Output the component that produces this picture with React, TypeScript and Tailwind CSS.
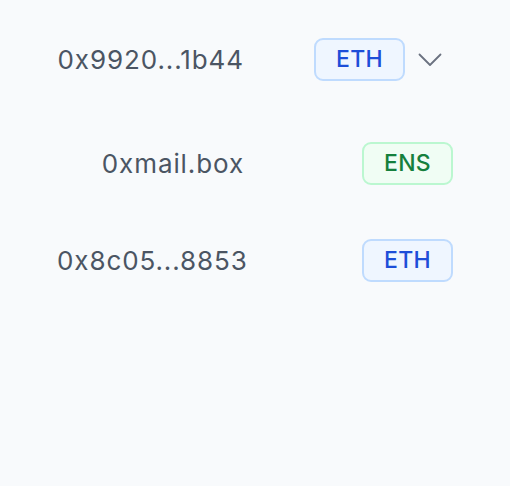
import React from 'react';

type Tag = 'ETH' | 'ENS';

interface Row {
  label: string;
  tag: Tag;
  expandable?: boolean;
}

const rows: Row[] = [
  { label: '0x9920...1b44', tag: 'ETH', expandable: true },
  { label: '0xmail.box', tag: 'ENS' },
  { label: '0x8c05...8853', tag: 'ETH' },
];

function Badge({ tag }: { tag: Tag }) {
  const styles =
    tag === 'ENS'
      ? 'bg-[#f0fdf4] border-[#bbf7d0] text-[#15803d]'
      : 'bg-[#eff6ff] border-[#bfdbfe] text-[#1d4ed8]';
  return (
    <span className={`inline-flex h-[43px] w-[91px] items-center justify-center rounded-[9px] border-2 text-[23px] font-medium tracking-[0.3px] ${styles}`}>
      {tag}
    </span>
  );
}

function Chevron() {
  return (
    <svg width="24" height="14" viewBox="0 0 24 14" fill="none" className="text-[#6b7280]">
      <path d="M1.5 1.5 L12 12 L22.5 1.5" stroke="currentColor" strokeWidth="1.8" strokeLinecap="round" strokeLinejoin="round" />
    </svg>
  );
}

export default function App() {
  return (
    <div className="min-h-[486px] w-[510px] bg-[#f8fafc] px-[57px] pt-[38px]" style={{ fontFamily: 'Inter, "Noto Sans", sans-serif' }}>
      {rows.map((row, i) => (
        <div key={row.label} className={`flex items-center justify-between ${i === 1 ? 'mt-[61px]' : i === 2 ? 'mt-[54px]' : ''}`}>
          <div className="w-[187px] whitespace-nowrap text-right text-[26px] tracking-[0.9px] text-[#4b5563]">{row.label}</div>
          {row.expandable ? (
            <div className="flex items-center gap-[13px] pr-[11px]">
              <Badge tag={row.tag} />
              <Chevron />
            </div>
          ) : (
            <Badge tag={row.tag} />
          )}
        </div>
      ))}
    </div>
  );
}
